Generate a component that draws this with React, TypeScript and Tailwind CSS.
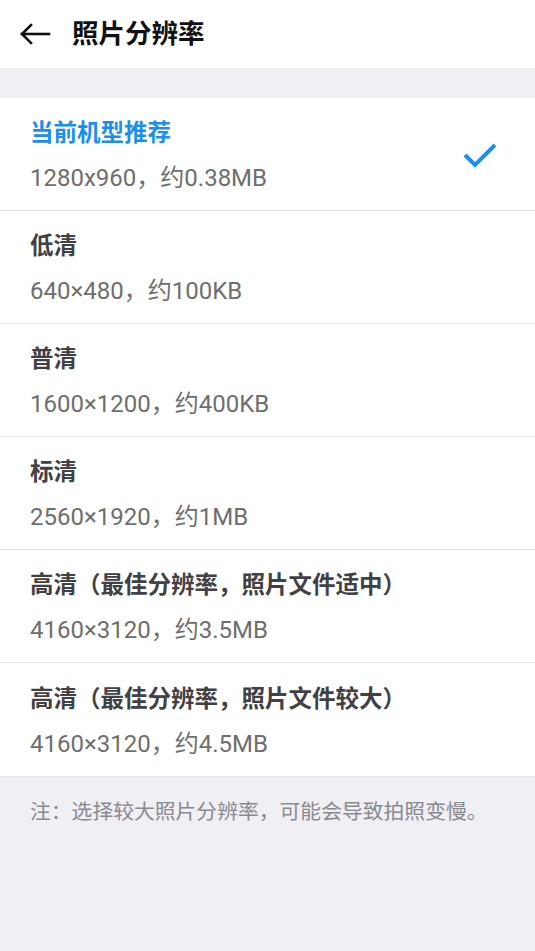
const font = { fontFamily: '"Roboto", "Noto Sans CJK SC", sans-serif' };

const options = [
  { title: "当前机型推荐", desc: "1280x960，约0.38MB", selected: true },
  { title: "低清", desc: "640×480，约100KB" },
  { title: "普清", desc: "1600×1200，约400KB" },
  { title: "标清", desc: "2560×1920，约1MB" },
  { title: "高清（最佳分辨率，照片文件适中）", desc: "4160×3120，约3.5MB" },
  { title: "高清（最佳分辨率，照片文件较大）", desc: "4160×3120，约4.5MB" },
];

export default function App() {
  return (
    <div className="min-h-[951px] w-[535px] bg-[#efeff4]" style={font}>
      {/* header */}
      <div className="flex h-[68px] items-center bg-white pl-[19px]">
        <svg width="32" height="22" viewBox="0 0 32 22" fill="none" stroke="#111" strokeWidth="2.6" strokeLinecap="square">
          <path d="M3 11h27" />
          <path d="M12 2l-9 9 9 9" />
        </svg>
        <h1 className="ml-[21px] text-[26.5px] font-bold leading-[34px] text-[#111]">照片分辨率</h1>
      </div>

      <div className="mt-[30px] bg-white">
        {options.map((o, i) => (
          <div
            key={i}
            className={`flex h-[113px] items-center pl-[30px] pr-[38px] ${i < options.length - 1 ? "border-b border-[#e3e3e8]" : ""}`}
          >
            <div className="flex-1 pt-[3px]">
              <div className={`text-[23.5px] font-bold leading-[30px] ${o.selected ? "text-[#1a8ff0]" : "text-[#414145]"}`}>
                {o.title}
              </div>
              <div className="mt-[15px] text-[24px] leading-[30px] text-[#6e6e6e]">{o.desc}</div>
            </div>
            {o.selected && (
              <svg className="mt-[3px]" width="34" height="26" viewBox="0 0 34 26" fill="none" stroke="#1a8ff0" strokeWidth="4">
                <path d="M2 12l10 10L32 2" />
              </svg>
            )}
          </div>
        ))}
      </div>
      <div className="border-t border-[#e3e3e8]" />

      <p className="pl-[30px] pt-[21px] text-[20.8px] leading-[28px] text-[#8a8a8e]">
        注：选择较大照片分辨率，可能会导致拍照变慢。
      </p>
    </div>
  );
}
